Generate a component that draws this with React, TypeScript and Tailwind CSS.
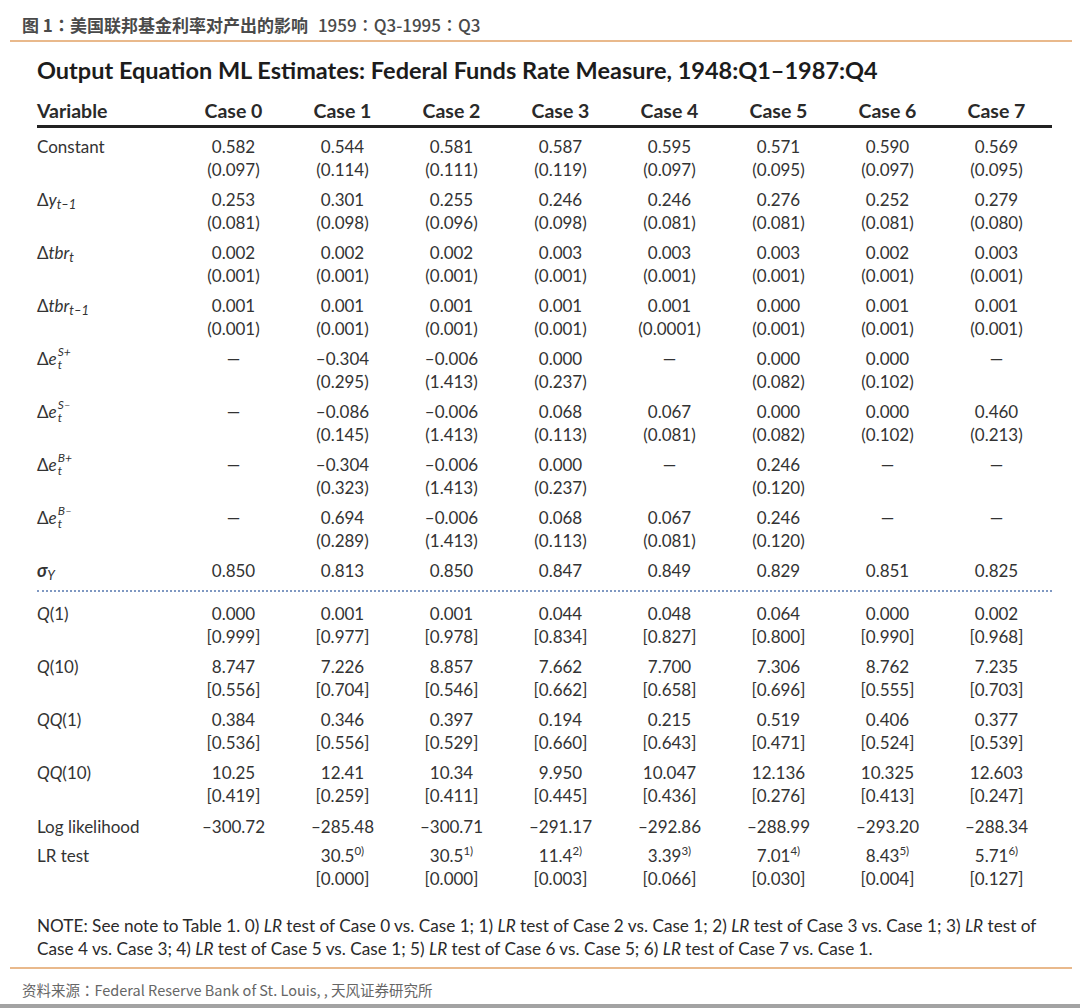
import React from "react";

type Cell = { v: React.ReactNode; s?: React.ReactNode } | null;

const D = "—";

function SupSub({ sup, sub }: { sup: string; sub: string }) {
  return (
    <span className="inline-flex flex-col align-middle ml-[1px] -translate-y-[2px]">
      <span className="text-[12px] italic leading-[14px]">{sup}</span>
      <span className="text-[12px] italic leading-[14px] -mt-[1px]">{sub}</span>
    </span>
  );
}

function Row({
  label,
  cells,
  className = "",
}: {
  label: React.ReactNode;
  cells: Cell[];
  className?: string;
}) {
  return (
    <div className={"grid grid-cols-[142px_repeat(8,109px)] leading-[23px] " + className}>
      <div className="whitespace-nowrap h-[23px]">{label}</div>
      {cells.map((c, i) => (
        <div key={i} className="flex flex-col items-center whitespace-nowrap">
          <span>{c ? c.v : D}</span>
          {c && c.s !== undefined ? <span>{c.s}</span> : null}
        </div>
      ))}
    </div>
  );
}

const p = (v: string, s?: string): Cell => ({ v, s: s !== undefined ? `(${s})` : undefined });
const b = (v: string, s: string): Cell => ({ v, s: `[${s}]` });
const lr = (v: string, n: string, s: string): Cell => ({
  v: (
    <span>
      {v}
      <sup className="text-[11.5px] -top-[7px]">{n})</sup>
    </span>
  ),
  s: `[${s}]`,
});

const Colon = () => (
  <span style={{ fontFamily: "'Noto Sans CJK TC', 'Noto Sans CJK SC', sans-serif" }}>：</span>
);

export default function App() {
  return (
    <div
      className="w-[1080px] h-[1008px] bg-white flex flex-col text-[#333]"
      style={{ fontFamily: "Lato, 'Open Sans', sans-serif" }}
    >
      <div
        className="px-[22px] pt-[15px] leading-[20px] text-[17px] text-[#4a4a4a] whitespace-nowrap"
        style={{ fontFamily: "'Noto Sans CJK SC', 'Noto Sans', sans-serif" }}
      >
        <span className="font-bold">
          图 1<Colon />美国联邦基金利率对产出的影响
        </span>
        <span className="font-medium ml-[10px]">
          1959<Colon />Q3-1995<Colon />Q3
        </span>
      </div>
      <div className="mx-[10px] mt-[5px] h-[2px] bg-[#e9b98c] w-[1062px]" />

      <div className="ml-[37px] mt-[14px] leading-[28px] text-[23.5px] font-bold text-[#1c1c1c] whitespace-nowrap">
        Output Equation ML Estimates: Federal Funds Rate Measure, 1948:Q1–1987:Q4
      </div>

      <div className="ml-[37px] mt-[15px] w-[1015px] text-[17px]">
        <div className="grid grid-cols-[142px_repeat(8,109px)] leading-[23px] font-bold text-[19.5px] text-[#2a2a2a] pb-[3px] border-b-[3px] border-[#222]">
          <div>Variable</div>
          {[0, 1, 2, 3, 4, 5, 6, 7].map((i) => (
            <div key={i} className="text-center">
              Case {i}
            </div>
          ))}
        </div>

        <Row
          className="mt-[7px]"
          label="Constant"
          cells={[
            p("0.582", "0.097"),
            p("0.544", "0.114"),
            p("0.581", "0.111"),
            p("0.587", "0.119"),
            p("0.595", "0.097"),
            p("0.571", "0.095"),
            p("0.590", "0.097"),
            p("0.569", "0.095"),
          ]}
        />
        <Row
          className="mt-[7px]"
          label={
            <span>
              Δ<i>y</i>
              <sub className="text-[13px] italic">t–1</sub>
            </span>
          }
          cells={[
            p("0.253", "0.081"),
            p("0.301", "0.098"),
            p("0.255", "0.096"),
            p("0.246", "0.098"),
            p("0.246", "0.081"),
            p("0.276", "0.081"),
            p("0.252", "0.081"),
            p("0.279", "0.080"),
          ]}
        />
        <Row
          className="mt-[7px]"
          label={
            <span>
              Δ<i>tbr</i>
              <sub className="text-[13px] italic">t</sub>
            </span>
          }
          cells={[
            p("0.002", "0.001"),
            p("0.002", "0.001"),
            p("0.002", "0.001"),
            p("0.003", "0.001"),
            p("0.003", "0.001"),
            p("0.003", "0.001"),
            p("0.002", "0.001"),
            p("0.003", "0.001"),
          ]}
        />
        <Row
          className="mt-[7px]"
          label={
            <span>
              Δ<i>tbr</i>
              <sub className="text-[13px] italic">t–1</sub>
            </span>
          }
          cells={[
            p("0.001", "0.001"),
            p("0.001", "0.001"),
            p("0.001", "0.001"),
            p("0.001", "0.001"),
            p("0.001", "0.0001"),
            p("0.000", "0.001"),
            p("0.001", "0.001"),
            p("0.001", "0.001"),
          ]}
        />
        <Row
          className="mt-[7px]"
          label={
            <span>
              Δ<i>e</i>
              <SupSub sup="S+" sub="t" />
            </span>
          }
          cells={[
            null,
            p("–0.304", "0.295"),
            p("–0.006", "1.413"),
            p("0.000", "0.237"),
            null,
            p("0.000", "0.082"),
            p("0.000", "0.102"),
            null,
          ]}
        />
        <Row
          className="mt-[7px]"
          label={
            <span>
              Δ<i>e</i>
              <SupSub sup="S–" sub="t" />
            </span>
          }
          cells={[
            null,
            p("–0.086", "0.145"),
            p("–0.006", "1.413"),
            p("0.068", "0.113"),
            p("0.067", "0.081"),
            p("0.000", "0.082"),
            p("0.000", "0.102"),
            p("0.460", "0.213"),
          ]}
        />
        <Row
          className="mt-[7px]"
          label={
            <span>
              Δ<i>e</i>
              <SupSub sup="B+" sub="t" />
            </span>
          }
          cells={[
            null,
            p("–0.304", "0.323"),
            p("–0.006", "1.413"),
            p("0.000", "0.237"),
            null,
            p("0.246", "0.120"),
            null,
            null,
          ]}
        />
        <Row
          className="mt-[7px]"
          label={
            <span>
              Δ<i>e</i>
              <SupSub sup="B–" sub="t" />
            </span>
          }
          cells={[
            null,
            p("0.694", "0.289"),
            p("–0.006", "1.413"),
            p("0.068", "0.113"),
            p("0.067", "0.081"),
            p("0.246", "0.120"),
            null,
            null,
          ]}
        />
        <Row
          className="mt-[7px]"
          label={
            <span>
              <i className="font-bold text-[18px]">σ</i>
              <sub className="text-[13px] italic">Y</sub>
            </span>
          }
          cells={[
            p("0.850"),
            p("0.813"),
            p("0.850"),
            p("0.847"),
            p("0.849"),
            p("0.829"),
            p("0.851"),
            p("0.825"),
          ]}
        />

        <div className="mt-[8px] border-t-2 border-dotted border-[#7f98c2]" />

        <Row
          className="mt-[10px]"
          label={
            <span>
              <i>Q</i>(1)
            </span>
          }
          cells={[
            b("0.000", "0.999"),
            b("0.001", "0.977"),
            b("0.001", "0.978"),
            b("0.044", "0.834"),
            b("0.048", "0.827"),
            b("0.064", "0.800"),
            b("0.000", "0.990"),
            b("0.002", "0.968"),
          ]}
        />
        <Row
          className="mt-[7px]"
          label={
            <span>
              <i>Q</i>(10)
            </span>
          }
          cells={[
            b("8.747", "0.556"),
            b("7.226", "0.704"),
            b("8.857", "0.546"),
            b("7.662", "0.662"),
            b("7.700", "0.658"),
            b("7.306", "0.696"),
            b("8.762", "0.555"),
            b("7.235", "0.703"),
          ]}
        />
        <Row
          className="mt-[7px]"
          label={
            <span>
              <i>QQ</i>(1)
            </span>
          }
          cells={[
            b("0.384", "0.536"),
            b("0.346", "0.556"),
            b("0.397", "0.529"),
            b("0.194", "0.660"),
            b("0.215", "0.643"),
            b("0.519", "0.471"),
            b("0.406", "0.524"),
            b("0.377", "0.539"),
          ]}
        />
        <Row
          className="mt-[7px]"
          label={
            <span>
              <i>QQ</i>(10)
            </span>
          }
          cells={[
            b("10.25", "0.419"),
            b("12.41", "0.259"),
            b("10.34", "0.411"),
            b("9.950", "0.445"),
            b("10.047", "0.436"),
            b("12.136", "0.276"),
            b("10.325", "0.413"),
            b("12.603", "0.247"),
          ]}
        />
        <Row
          className="mt-[8px]"
          label="Log likelihood"
          cells={[
            p("–300.72"),
            p("–285.48"),
            p("–300.71"),
            p("–291.17"),
            p("–292.86"),
            p("–288.99"),
            p("–293.20"),
            p("–288.34"),
          ]}
        />
        <Row
          className="mt-[6px]"
          label="LR test"
          cells={[
            { v: "\u00a0" },
            lr("30.5", "0", "0.000"),
            lr("30.5", "1", "0.000"),
            lr("11.4", "2", "0.003"),
            lr("3.39", "3", "0.066"),
            lr("7.01", "4", "0.030"),
            lr("8.43", "5", "0.004"),
            lr("5.71", "6", "0.127"),
          ]}
        />
      </div>

      <div className="ml-[37px] mt-[24px] text-[17.2px] leading-[23px] text-[#2a2a2a] whitespace-nowrap">
        <div>
          NOTE: See note to Table 1. 0) <i>LR</i> test of Case 0 vs. Case 1; 1) <i>LR</i> test of Case 2 vs. Case 1; 2){" "}
          <i>LR</i> test of Case 3 vs. Case 1; 3) <i>LR</i> test of
        </div>
        <div>
          Case 4 vs. Case 3; 4) <i>LR</i> test of Case 5 vs. Case 1; 5) <i>LR</i> test of Case 6 vs. Case 5; 6){" "}
          <i>LR</i> test of Case 7 vs. Case 1.
        </div>
      </div>

      <div className="mx-[10px] mt-[7px] h-[2px] bg-[#e9b98c] w-[1062px]" />

      <div
        className="px-[22px] mt-[11px] leading-[20px] text-[14.5px] text-[#666] whitespace-nowrap"
        style={{ fontFamily: "'Noto Sans CJK SC', 'Noto Sans', sans-serif" }}
      >
        资料来源<Colon />Federal Reserve Bank of St. Louis, , 天风证券研究所
      </div>

      <div className="mt-auto h-[4px] bg-[#a3a3a3]" />
    </div>
  );
}
